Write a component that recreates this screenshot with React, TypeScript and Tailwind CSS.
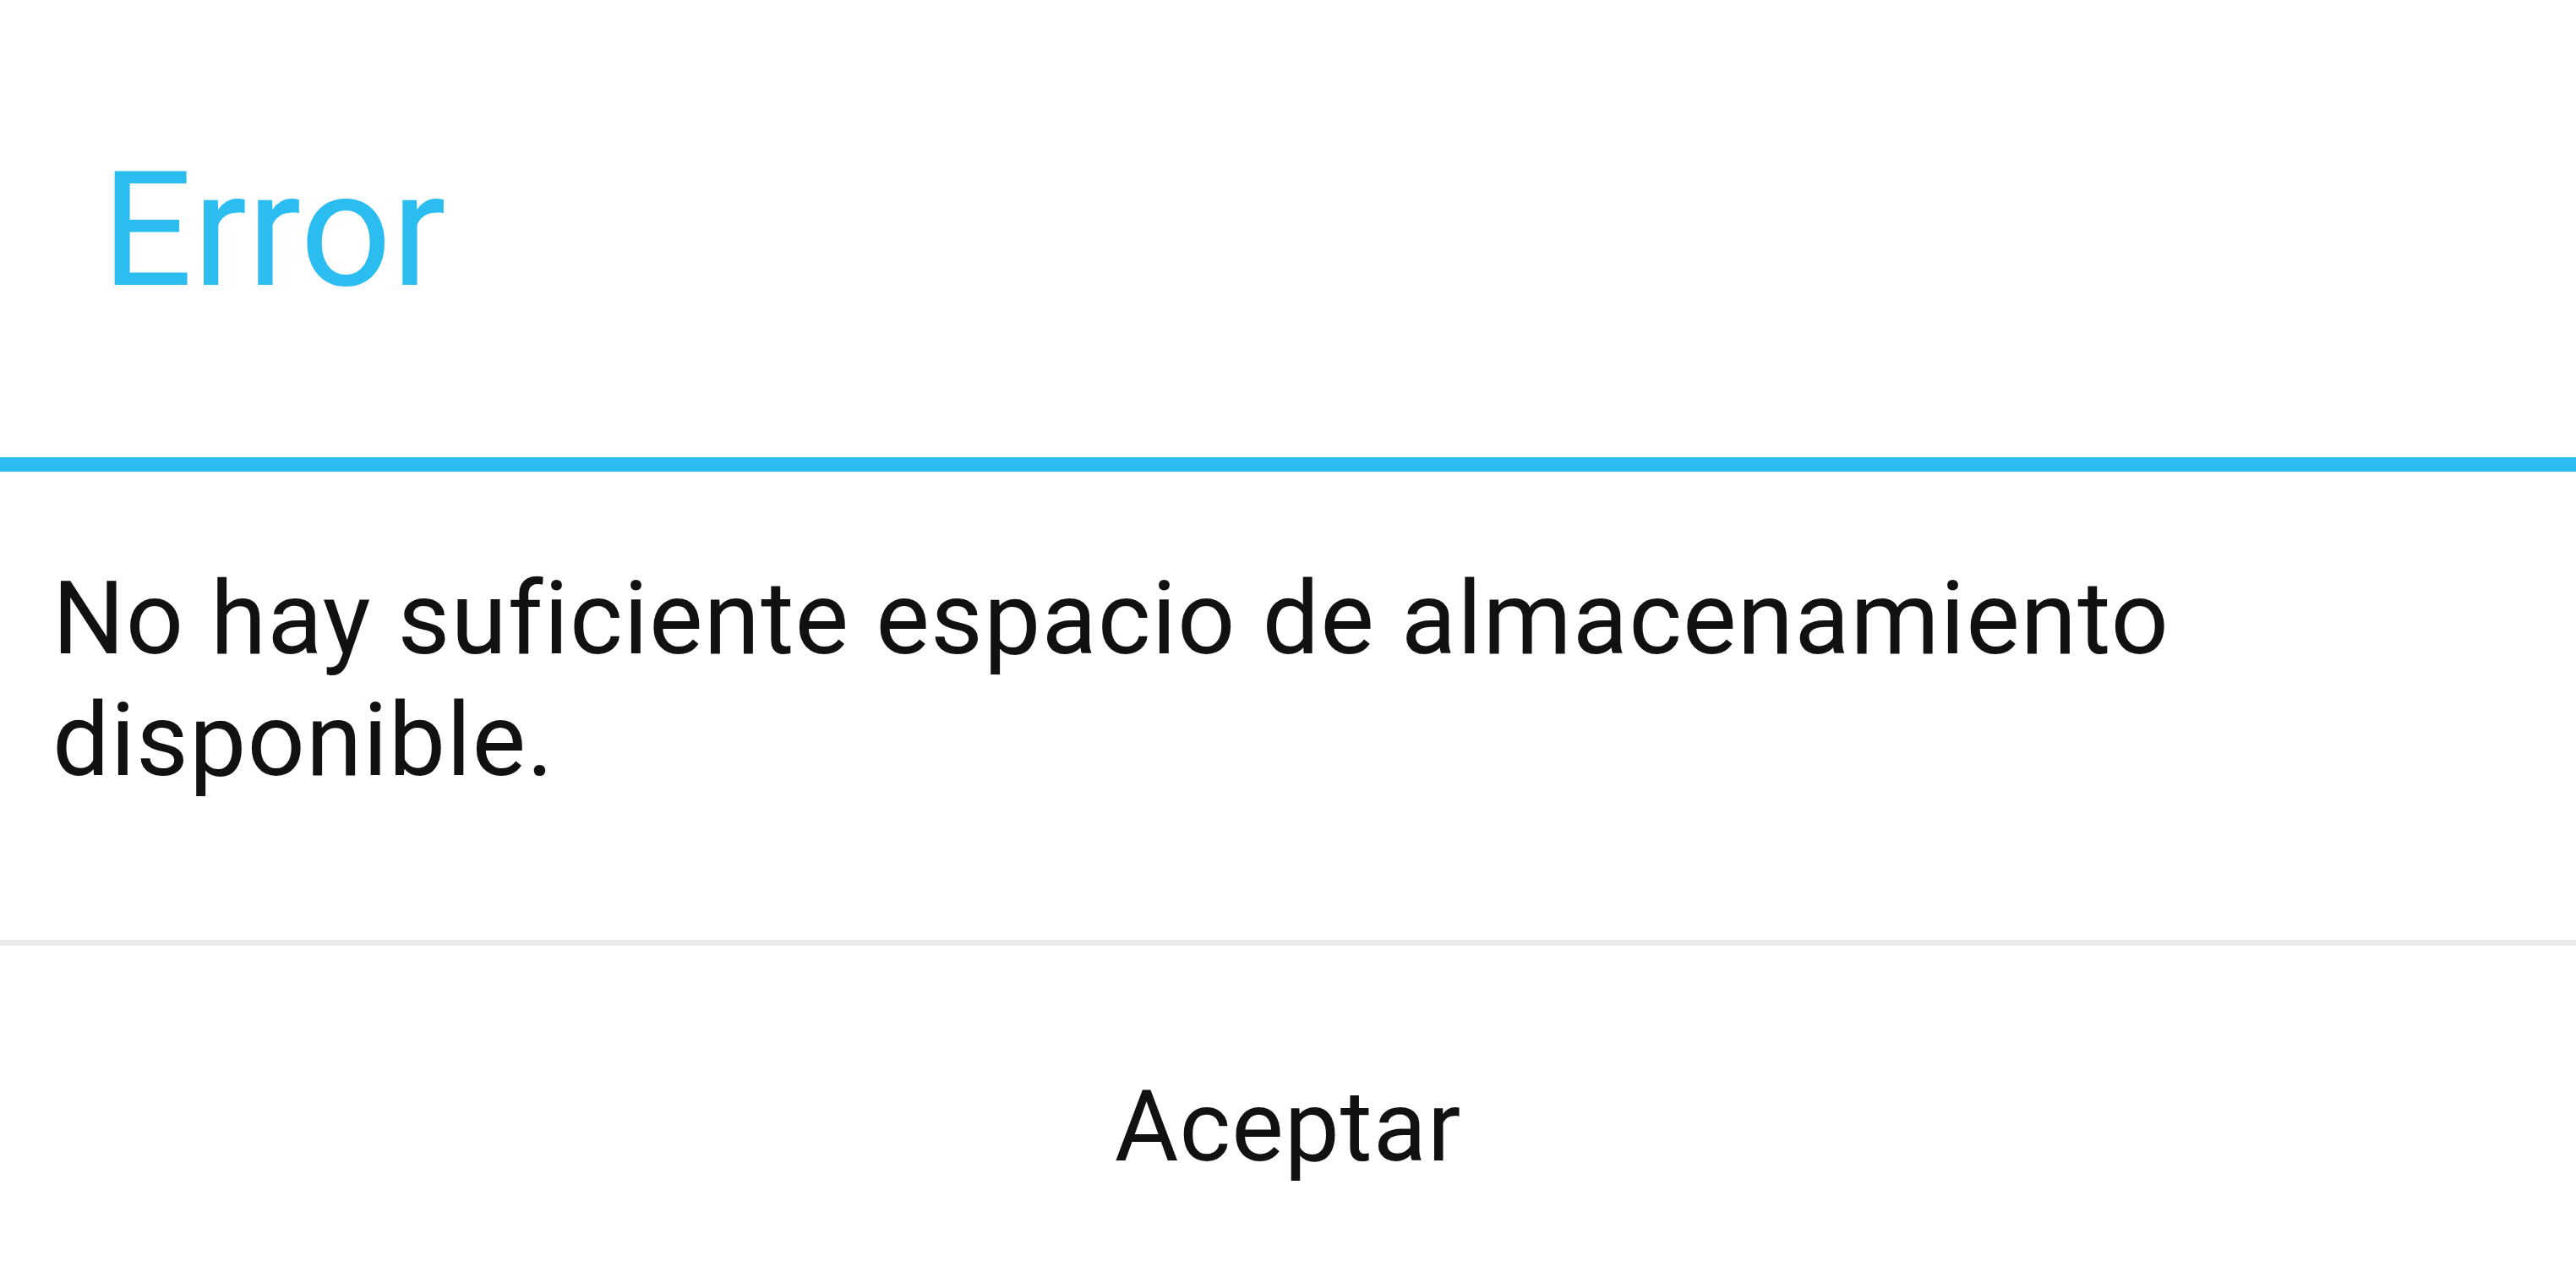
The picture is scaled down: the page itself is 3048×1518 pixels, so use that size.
import React from "react";

export default function App() {
  return (
    <div
      className="w-[3048px] h-[1518px] bg-white flex flex-col overflow-hidden"
      style={{ fontFamily: "Roboto, 'Noto Sans', sans-serif" }}
    >
      <div className="h-[541px] shrink-0 pl-[120px] pt-[177px]">
        <div className="text-[190px] leading-[190px] text-[#2bbcf0]">Error</div>
      </div>
      <div className="h-[17px] shrink-0 bg-[#2bbcf0]" />
      <div className="h-[554px] shrink-0 pl-[62px] pr-[62px] pt-[102px]">
        <p className="text-[120px] leading-[144px] tracking-[1.1px] text-[#111111]">
          No hay suficiente espacio de almacenamiento disponible.
        </p>
      </div>
      <div className="h-[7px] shrink-0 bg-[#ebebeb]" />
      <div className="flex-1 flex justify-center pt-[156px]">
        <span className="text-[116px] leading-[116px] tracking-[1px] text-[#111111]">Aceptar</span>
      </div>
    </div>
  );
}
